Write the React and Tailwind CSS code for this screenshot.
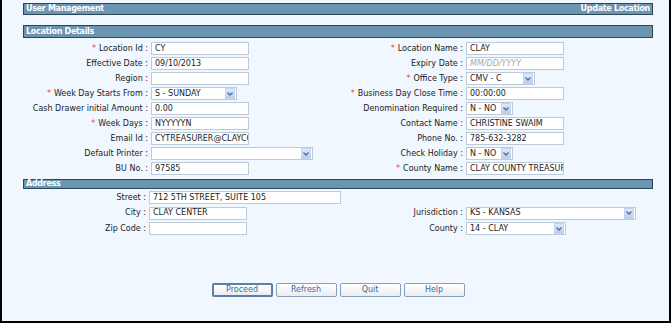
import React from "react";

const font = { fontFamily: '"DejaVu Sans", Verdana, sans-serif' };

function Bar({ left, right, className = "" }) {
    return (
        <div
            className={`flex items-center justify-between bg-[#6c95b2] border border-[#2c4759] px-[2px] text-white font-bold text-[8px] tracking-[-0.3px] leading-none ${className}`}
        >
            <span>{left}</span>
            {right && <span>{right}</span>}
        </div>
    );
}

function Label({ text, req }) {
    return (
        <div className="text-right whitespace-nowrap text-[#222] pr-[3px]">
            {req && <span className="text-[#e0463c] mr-[3px]">*</span>}
            {text} :
        </div>
    );
}

function TextBox({ value, width = "w-[98px]", placeholder }) {
    return (
        <div
            className={`${width} h-[13px] bg-white border border-[#bccbdb] pl-[3px] flex items-center overflow-hidden whitespace-nowrap text-[#222]`}
        >
            {value ? value : <span className="italic text-[#a9a9a9]">{placeholder}</span>}
        </div>
    );
}

function Select({ value, width }) {
    return (
        <div
            className={`${width} h-[13px] bg-white border border-[#bccbdb] pl-[3px] flex items-center justify-between gap-[2px] whitespace-nowrap text-[#222]`}
        >
            <span>{value}</span>
            <span className="shrink-0 w-[10px] h-[11px] mr-px bg-gradient-to-b from-[#dfeafb] to-[#b9cdec] border border-[#c5d4ea] flex items-center justify-center">
                <svg width="6" height="4" viewBox="0 0 6 4">
                    <path d="M0.5 0.5 L3 3 L5.5 0.5" stroke="#4a6ea8" strokeWidth="1.3" fill="none" />
                </svg>
            </span>
        </div>
    );
}

const rows = [
    [
        { label: "Location Id", req: true, field: <TextBox value="CY" /> },
        { label: "Location Name", req: true, field: <TextBox value="CLAY" /> },
    ],
    [
        { label: "Effective Date", field: <TextBox value="09/10/2013" /> },
        { label: "Expiry Date", field: <TextBox placeholder="MM/DD/YYYY" /> },
    ],
    [
        { label: "Region", field: <TextBox value="" placeholder="" /> },
        { label: "Office Type", req: true, field: <Select value="CMV - C" width="w-[69px]" /> },
    ],
    [
        { label: "Week Day Starts From", req: true, field: <Select value="S - SUNDAY" width="w-[86px]" /> },
        { label: "Business Day Close Time", req: true, field: <TextBox value="00:00:00" /> },
    ],
    [
        { label: "Cash Drawer initial Amount", field: <TextBox value="0.00" /> },
        { label: "Denomination Required", field: <Select value="N - NO" width="w-[47px]" /> },
    ],
    [
        { label: "Week Days", req: true, field: <TextBox value="NYYYYYN" /> },
        { label: "Contact Name", field: <TextBox value="CHRISTINE SWAIM" /> },
    ],
    [
        { label: "Email Id", field: <TextBox value="CYTREASURER@CLAYCOUNTY.COM" /> },
        { label: "Phone No.", field: <TextBox value="785-632-3282" /> },
    ],
    [
        { label: "Default Printer", field: <Select value="" width="w-[162px]" /> },
        { label: "Check Holiday", field: <Select value="N - NO" width="w-[47px]" /> },
    ],
    [
        { label: "BU No.", field: <TextBox value="97585" /> },
        { label: "County Name", req: true, field: <TextBox value="CLAY COUNTY TREASURER" /> },
    ],
];

function Button({ children, primary }) {
    return (
        <button
            className={`w-[61px] h-[14px] flex items-center justify-center rounded-[2px] bg-gradient-to-b from-white to-[#e9ecf0] text-[#45679a] leading-none ${
                primary ? "border-2 border-[#5d7eb0]" : "border border-[#8a9fb8]"
            }`}
        >
            {children}
        </button>
    );
}

export default function App() {
    return (
        <div
            style={font}
            className="w-[671px] h-[323px] bg-[#f0f7fe] border-l-2 border-r-2 border-b-2 border-black pl-[21px] pr-[16px] pt-[3px] text-[8px] leading-none overflow-hidden"
        >
            <Bar left="User Management" right="Update Location" className="h-[12px]" />

            <Bar left="Location Details" className="h-[13px] mt-[10px]" />

            {/* LOCATION DETAILS */}
            <div className="mt-[3px]">
                {rows.map((row, i) => (
                    <div key={i} className="grid grid-cols-[128px_181px_134px_1fr] h-[15px] items-center">
                        <Label text={row[0].label} req={row[0].req} />
                        <div>{row[0].field}</div>
                        <Label text={row[1].label} req={row[1].req} />
                        <div>{row[1].field}</div>
                    </div>
                ))}
            </div>

            <Bar left="Address" className="h-[10px] mt-[3px]" />

            {/* ADDRESS */}
            <div className="mt-[1px]">
                <div className="grid grid-cols-[126px_1fr] h-[15px] items-center">
                    <Label text="Street" />
                    <TextBox value="712 5TH STREET, SUITE 105" width="w-[192px]" />
                </div>
                <div className="grid grid-cols-[126px_184px_133px_1fr] h-[16px] items-center">
                    <Label text="City" />
                    <TextBox value="CLAY CENTER" />
                    <Label text="Jurisdiction" />
                    <Select value="KS - KANSAS" width="w-[170px]" />
                </div>
                <div className="grid grid-cols-[126px_184px_133px_1fr] h-[15px] items-center">
                    <Label text="Zip Code" />
                    <TextBox value="" />
                    <Label text="County" />
                    <Select value="14 - CLAY" width="w-[100px]" />
                </div>
            </div>

            {/* BUTTONS */}
            <div className="mt-[47px] flex justify-center gap-[3px]">
                <Button primary>Proceed</Button>
                <Button>Refresh</Button>
                <Button>Quit</Button>
                <Button>Help</Button>
            </div>
        </div>
    );
}
